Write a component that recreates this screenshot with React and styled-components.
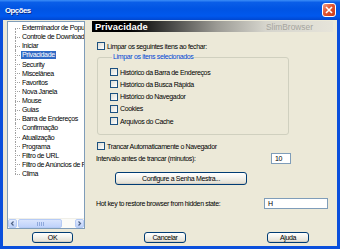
import styled, { createGlobalStyle } from "styled-components"

const GlobalStyle = createGlobalStyle`
    html, body {
        margin: 0;
        padding: 0;
        background: #ece9d8;
    }
    body {
        font-family: "Liberation Sans", Arial, sans-serif;
        font-size: 7px;
        letter-spacing: -0.35px;
        color: #000;
    }
`;

const Window = styled.div`
    width: 340px;
    height: 249px;
    box-sizing: border-box;
    display: flex;
    flex-direction: column;
    background: #0a4fdc;
    overflow: hidden;
`;

const TitleBar = styled.div`
    height: 20px;
    flex-shrink: 0;
    display: flex;
    align-items: center;
    justify-content: space-between;
    padding: 0 4px 0 5px;
    background: linear-gradient(to bottom, #3c8ef8 0%, #0a5ee8 12%, #0054e3 45%, #0058ee 80%, #0047d0 100%);
`;

const Title = styled.span`
    color: #fff;
    font-weight: 700;
    font-size: 7.8px;
    letter-spacing: -0.5px;
    text-shadow: 1px 1px 0 #0a2a88;
`;

const CloseButton = styled.div`
    width: 12px;
    height: 12px;
    margin-top: -1px;
    border: 1px solid #fff;
    border-radius: 3px;
    background: linear-gradient(135deg, #f0a08a 0%, #e2542f 45%, #c93a18 100%);
    display: flex;
    align-items: center;
    justify-content: center;
`;

const Client = styled.div`
    flex: 1;
    margin: 0 3px 3px 3px;
    background: #ece9d8;
    display: flex;
    flex-direction: column;
`;

const Body = styled.div`
    display: flex;
    padding: 1px 4px 0 4px;
    gap: 7px;
`;

const Tree = styled.div`
    width: 78px;
    height: 208px;
    box-sizing: border-box;
    border: 1px solid #7f9db9;
    background: #fff;
    display: flex;
    flex-direction: column;
    overflow: hidden;
`;

const TreeList = styled.div`
    flex: 1;
    padding-top: 1px;
`;

const TreeItem = styled.div`
    position: relative;
    height: 9.125px;
    line-height: 9.125px;
    padding-left: 13px;
    white-space: nowrap;
    &::before {
        content: "";
        position: absolute;
        left: 7px;
        top: 50%;
        width: 5px;
        border-top: 1px dotted #a0a0a0;
    }
    &::after {
        content: "";
        position: absolute;
        left: 7px;
        top: ${p => (p.$first ? "50%" : "0")};
        bottom: ${p => (p.$last ? "50%" : "0")};
        border-left: 1px dotted #a0a0a0;
    }
`;

const ItemLabel = styled.span`
    display: inline-block;
    padding: 0 1px;
    line-height: 8px;
    background: ${p => (p.$selected ? "#316ac5" : "transparent")};
    color: ${p => (p.$selected ? "#fff" : "#000")};
`;

const HScroll = styled.div`
    height: 9px;
    display: flex;
    background: #fbfbf8;
    border-top: 1px solid #f0efe8;
`;

const ScrollArrow = styled.div`
    width: 9px;
    box-sizing: border-box;
    border: 1px solid #b6cbf5;
    border-radius: 2px;
    background: linear-gradient(to bottom, #e2ebfe, #bcd0f8);
    display: flex;
    align-items: center;
    justify-content: center;
`;

const ScrollThumb = styled.div`
    width: 44px;
    margin-left: 1px;
    box-sizing: border-box;
    border: 1px solid #b6cbf5;
    border-radius: 2px;
    background: linear-gradient(to bottom, #d8e4fd, #bfd2fb);
    display: flex;
    align-items: center;
    justify-content: center;
    gap: 1px;
`;

const Grip = styled.span`
    width: 1px;
    height: 4px;
    background: #8fa9dc;
`;

const ScrollTrack = styled.div`
    flex: 1;
`;

const Panel = styled.div`
    width: 241px;
    display: flex;
    flex-direction: column;
`;

const Header = styled.div`
    height: 11px;
    display: flex;
    align-items: center;
    justify-content: space-between;
    padding: 0 20px 0 3px;
    background: linear-gradient(to right, #000 0%, #000 15%, #4a4a48 33%, #9c9b95 52%, #d6d5cd 72%, #e6e4da 100%);
`;

const HeaderTitle = styled.span`
    color: #fff;
    font-weight: 700;
    font-size: 9.4px;
    letter-spacing: 0;
`;

const Brand = styled.span`
    color: #a6a59e;
    font-size: 8.4px;
    letter-spacing: 0;
`;

const Content = styled.div`
    width: 194px;
    padding-left: 5px;
    display: flex;
    flex-direction: column;
`;

const CheckRow = styled.label`
    display: flex;
    align-items: center;
    height: ${p => p.$h || 8}px;
    margin-top: ${p => p.$mt || 0}px;
    gap: 2px;
    white-space: nowrap;
`;

const Box = styled.span`
    width: 8px;
    height: 8px;
    box-sizing: border-box;
    border: 1px solid #1c5180;
    background: linear-gradient(135deg, #dcdcd4, #fff);
    flex-shrink: 0;
`;

const Group = styled.fieldset`
    margin: 3px 0 0 0;
    padding: 2px 0 7px 12px;
    border: 1px solid #d0d0bf;
    border-radius: 3px;
    width: 192px;
    box-sizing: border-box;
`;

const Legend = styled.legend`
    color: #0046d5;
    padding: 0 1px;
    margin-left: 2px;
    line-height: 8px;
`;

const Row = styled.div`
    display: flex;
    align-items: center;
    justify-content: space-between;
    margin-top: ${p => p.$mt || 0}px;
    margin-left: -1px;
    white-space: nowrap;
`;

const TextBox = styled.div`
    width: ${p => p.$w}px;
    height: 11px;
    box-sizing: border-box;
    border: 1px solid #7f9db9;
    background: #fff;
    padding-left: 3px;
    line-height: 9px;
    margin-right: ${p => p.$mr || 0}px;
`;

const Button = styled.button`
    font-family: "Liberation Sans", Arial, sans-serif;
    font-size: 7px;
    letter-spacing: -0.35px;
    color: #000;
    width: ${p => p.$w}px;
    height: ${p => p.$h || 11}px;
    margin-left: ${p => p.$ml || 0}px;
    margin-top: ${p => p.$mt || 0}px;
    padding: 0;
    border: 1px solid #003c74;
    border-radius: 3px;
    background: linear-gradient(to bottom, #ffffff 0%, #f4f3ee 40%, #e6e3d8 85%, #d6d0c5 100%);
    box-shadow: inset 0 -1px 0 #d6d0c5;
    cursor: pointer;
`;

const Footer = styled.div`
    display: flex;
    margin-top: 3px;
`;

const items = [
    "Exterminador de Popups",
    "Controle de Download",
    "Iniciar",
    "Privacidade",
    "Security",
    "Miscelânea",
    "Favoritos",
    "Nova Janela",
    "Mouse",
    "Guias",
    "Barra de Endereços",
    "Confirmação",
    "Atualização",
    "Programa",
    "Filtro de URL",
    "Filtro de Anúncios de Flash",
    "Clima",
];

const clearItems = [
    "Histórico da Barra de Endereços",
    "Histórico da Busca Rápida",
    "Histórico do Navegador",
    "Cookies",
    "Arquivos do Cache",
];

export default function App() {
    return (
        <>
            <GlobalStyle />
            <Window>
                <TitleBar>
                    <Title>Opções</Title>
                    <CloseButton>
                        <svg width="8" height="8" viewBox="0 0 8 8">
                            <path d="M1 1 L7 7 M7 1 L1 7" stroke="#fff" strokeWidth="1.6" />
                        </svg>
                    </CloseButton>
                </TitleBar>
                <Client>
                    <Body>
                        <Tree>
                            <TreeList>
                                {items.map((it, i) => (
                                    <TreeItem key={it} $first={i === 0} $last={i === items.length - 1}>
                                        <ItemLabel $selected={it === "Privacidade"}>{it}</ItemLabel>
                                    </TreeItem>
                                ))}
                            </TreeList>
                            <HScroll>
                                <ScrollArrow>
                                    <svg width="5" height="5" viewBox="0 0 5 5">
                                        <path d="M3.5 0.5 L1.5 2.5 L3.5 4.5" stroke="#4d6185" strokeWidth="1.2" fill="none" />
                                    </svg>
                                </ScrollArrow>
                                <ScrollThumb>
                                    <Grip /><Grip /><Grip /><Grip />
                                </ScrollThumb>
                                <ScrollTrack />
                                <ScrollArrow>
                                    <svg width="5" height="5" viewBox="0 0 5 5">
                                        <path d="M1.5 0.5 L3.5 2.5 L1.5 4.5" stroke="#4d6185" strokeWidth="1.2" fill="none" />
                                    </svg>
                                </ScrollArrow>
                            </HScroll>
                        </Tree>
                        <Panel>
                            <Header>
                                <HeaderTitle>Privacidade</HeaderTitle>
                                <Brand>SlimBrowser</Brand>
                            </Header>
                            <Content>
                                <CheckRow $mt={10}>
                                    <Box />
                                    Limpar os seguintes itens ao fechar:
                                </CheckRow>
                                <Group>
                                    <Legend>Limpar os itens selecionados</Legend>
                                    {clearItems.map((c, i) => (
                                        <CheckRow key={c} $h={12.25} $mt={i === 0 ? 3 : 0}>
                                            <Box />
                                            {c}
                                        </CheckRow>
                                    ))}
                                </Group>
                                <CheckRow $mt={7}>
                                    <Box />
                                    Trancar Automaticamente o Navegador
                                </CheckRow>
                                <Row $mt={3}>
                                    Intervalo antes de trancar (minutos):
                                    <TextBox $w={20}>10</TextBox>
                                </Row>
                                <Button $w={132} $h={13} $ml={18} $mt={8}>
                                    Configure a Senha Mestra...
                                </Button>
                                <Row $mt={13}>
                                    Hot key to restore browser from hidden state:
                                    <TextBox $w={64} $mr={-37}>H</TextBox>
                                </Row>
                            </Content>
                        </Panel>
                    </Body>
                    <Footer>
                        <Button $w={41} $ml={29}>OK</Button>
                        <Button $w={42} $ml={71}>Cancelar</Button>
                        <Button $w={42} $ml={81}>Ajuda</Button>
                    </Footer>
                </Client>
            </Window>
        </>
    )
}
